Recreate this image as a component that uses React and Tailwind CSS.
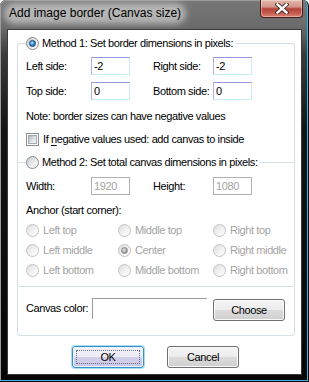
function Radio({ checked, disabled }) {
  return (
    <span
      className={
        disabled
          ? "flex h-[13px] w-[13px] shrink-0 items-center justify-center rounded-full border border-[#c2c2c2] bg-[linear-gradient(135deg,#dedede_0%,#f4f4f4_60%,#ffffff_100%)]"
          : "flex h-[13px] w-[13px] shrink-0 items-center justify-center rounded-full border border-[#8b8b8b] bg-[linear-gradient(135deg,#c3c7cc_0%,#eceef0_60%,#ffffff_100%)]"
      }
    >
      {checked && !disabled && (
        <span className="h-[7px] w-[7px] rounded-full border border-[#17406e] bg-[radial-gradient(circle_at_40%_35%,#bfe9ff_0%,#3a93e0_45%,#0f4c91_100%)]" />
      )}
      {checked && disabled && (
        <span className="h-[7px] w-[7px] rounded-full border border-[#8a8a8a] bg-[radial-gradient(circle_at_40%_35%,#e8e8e8_0%,#a8a8a8_55%,#8a8a8a_100%)]" />
      )}
    </span>
  );
}

function TextBox({ value, disabled }) {
  return disabled ? (
    <div className="flex h-[18px] w-[39px] shrink-0 items-center border border-[#b1b1b1] pl-[2px] text-[#a3a3a3]">
      {value}
    </div>
  ) : (
    <div className="flex h-[18px] w-[39px] shrink-0 items-center border border-t-[#9696dc] border-l-[#b2b2e6] border-r-[#cbeaf2] border-b-[#c7ecf4] pl-[2px]">
      {value}
    </div>
  );
}

function Btn({ children, focused }) {
  return focused ? (
    <div className="relative flex h-[22px] w-[72px] items-center justify-center rounded-[3px] border border-[#3a8fc8] bg-[linear-gradient(180deg,#f4f3fb_0%,#ecebf6_50%,#d3d1ea_50%,#c9c7e2_100%)] shadow-[0_0_0_1px_#a8dcf4,inset_0_0_0_1px_#e8f6fc]">
      <span className="pointer-events-none absolute inset-[3px] border border-dotted border-[#6a6a8a]" />
      <span className="relative">{children}</span>
    </div>
  ) : (
    <div className="flex h-[22px] w-[72px] shrink-0 items-center justify-center rounded-[3px] border border-[#707070] bg-[linear-gradient(180deg,#f4f4f4_0%,#ececec_50%,#dcdcdc_50%,#cfcfcf_100%)] shadow-[inset_0_0_0_1px_#fbfbfb]">
      {children}
    </div>
  );
}

function AnchorOpt({ label, checked }) {
  return (
    <div className="flex h-[20px] items-center gap-[4px] whitespace-nowrap text-[#a4a4a4]">
      <Radio disabled checked={checked} />
      <span>{label}</span>
    </div>
  );
}

export default function App() {
  return (
    <div className="h-[382px] w-[309px] overflow-hidden rounded-t-[6px] bg-[#080808] pr-px pb-px font-['Liberation_Sans',Arial,sans-serif] text-[11px] leading-[14px] text-black">
      <div className="flex h-full flex-col rounded-t-[6px] border-r border-b border-[#3cb4e4] bg-[linear-gradient(180deg,#777777_0px,#6b6b6b_27px,#3a3a3a_55px,#141414_130px,#060606_100%)] pb-[5px] pl-[7px] pr-[5px] shadow-[inset_1px_1px_0_#9c9c9c]">
        {/* title bar */}
        <div className="flex h-[29px] shrink-0 items-start">
          <div className="relative ml-[2px] mt-[6px]">
            <span className="absolute -inset-x-[5px] -inset-y-[3px] rounded-full bg-[#d2d2d2]/70 blur-[3px]" />
            <span className="relative text-[12px] leading-[15px] text-black">
              Add image border (Canvas size)
            </span>
          </div>
          <div className="-mr-px ml-auto flex h-[18px] w-[43px] items-center justify-center rounded-b-[4px] border border-t-0 border-[#4a1d18] bg-[linear-gradient(180deg,#e3b6ab_0%,#d4968a_40%,#b3443a_52%,#c2554a_72%,#da8474_100%)] shadow-[inset_0_0_0_1px_rgba(255,255,255,0.35)]">
            <svg width="14" height="11" viewBox="0 0 14 11">
              <path d="M2.5 1.5 L11.5 9.5 M11.5 1.5 L2.5 9.5" stroke="#3a2421" strokeWidth="4.2" strokeLinecap="square" fill="none" />
              <path d="M2.5 1.5 L11.5 9.5 M11.5 1.5 L2.5 9.5" stroke="#ffffff" strokeWidth="2.4" strokeLinecap="square" fill="none" />
            </svg>
          </div>
        </div>

        {/* client */}
        <div className="flex flex-1 flex-col border border-[#3a3a3a] bg-white pl-[9px] pr-[6px] pt-[13px] tracking-[-0.4px]">
          {/* group 1 */}
          <div className="rounded-t-[3px] border-x border-t border-[#d5dfe5] pb-[16px] pl-[8px]">
            <div className="-mt-[8px] flex h-[14px] w-fit items-center gap-[3px] whitespace-nowrap bg-white pr-[2px]">
              <Radio checked />
              <span>Method 1: Set border dimensions in pixels:</span>
            </div>
            <div className="mt-[7px] flex h-[18px] items-center whitespace-nowrap">
              <span className="w-[65px] shrink-0">Left side:</span>
              <TextBox value="-2" />
              <span className="w-[23px] shrink-0" />
              <span className="w-[60px] shrink-0">Right side:</span>
              <TextBox value="-2" />
            </div>
            <div className="mt-[7px] flex h-[18px] items-center whitespace-nowrap">
              <span className="w-[65px] shrink-0">Top side:</span>
              <TextBox value="0" />
              <span className="w-[23px] shrink-0" />
              <span className="w-[60px] shrink-0">Bottom side:</span>
              <TextBox value="0" />
            </div>
            <div className="mt-[9px] h-[14px] whitespace-nowrap">Note: border sizes can have negative values</div>
            <div className="mt-[9px] flex h-[14px] items-center gap-[4px] whitespace-nowrap">
              <span className="flex h-[13px] w-[13px] shrink-0 items-center justify-center border border-[#8e8f8f] bg-white">
                <span className="h-[9px] w-[9px] border border-[#a6aab0] bg-[linear-gradient(135deg,#b4b9bf_0%,#dfe2e5_55%,#f6f6f6_100%)]" />
              </span>
              <span>
                If <span className="underline underline-offset-[2px]">n</span>egative values used: add canvas to inside
              </span>
            </div>
          </div>

          {/* group 2 */}
          <div className="border-x border-t border-[#d5dfe5] pb-[6px] pl-[8px]">
            <div className="-mt-[8px] flex h-[14px] w-fit items-center gap-[3px] whitespace-nowrap bg-white pr-[2px]">
              <Radio />
              <span>Method 2: Set total canvas dimensions in pixels:</span>
            </div>
            <div className="mt-[8px] flex h-[18px] items-center whitespace-nowrap">
              <span className="w-[65px] shrink-0">Width:</span>
              <TextBox value="1920" disabled />
              <span className="w-[23px] shrink-0" />
              <span className="w-[60px] shrink-0">Height:</span>
              <TextBox value="1080" disabled />
            </div>
            <div className="mt-[8px] h-[14px]">Anchor (start corner):</div>
            <div className="mt-[3px] grid grid-cols-[92px_95px_1fr]">
              <AnchorOpt label="Left top" />
              <AnchorOpt label="Middle top" />
              <AnchorOpt label="Right top" />
              <AnchorOpt label="Left middle" />
              <AnchorOpt label="Center" checked />
              <AnchorOpt label="Right middle" />
              <AnchorOpt label="Left bottom" />
              <AnchorOpt label="Middle bottom" />
              <AnchorOpt label="Right bottom" />
            </div>
          </div>

          {/* group 3 */}
          <div className="rounded-b-[3px] border border-[#d5dfe5] pb-[14px] pl-[8px] pt-[12px]">
            <div className="flex h-[22px] items-start">
              <span className="mt-[2px] w-[66px] shrink-0 whitespace-nowrap">Canvas color:</span>
              <div className="-mt-px h-[21px] w-[115px] shrink-0 border-l border-t border-[#9a9a9a]" />
              <div className="ml-[6px]">
                <Btn>Choose</Btn>
              </div>
            </div>
          </div>

          {/* buttons */}
          <div className="mt-[10px] flex justify-center gap-[23px] pr-px">
            <Btn focused>OK</Btn>
            <Btn>Cancel</Btn>
          </div>
        </div>
      </div>
    </div>
  );
}
